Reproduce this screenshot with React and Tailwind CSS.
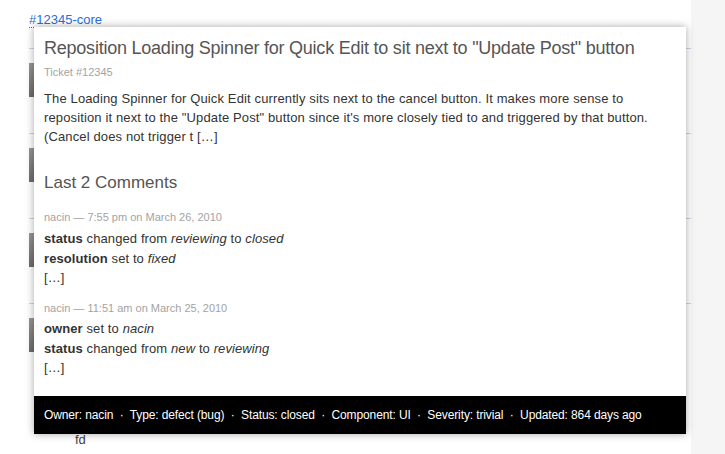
import React from 'react';

const rows = [0, 1, 2, 3];

export default function App() {
  return (
    <div className="relative w-[725px] h-[454px] overflow-hidden bg-[#f5f5f5] text-[#333]" style={{ fontFamily: '"Liberation Sans", Arial, sans-serif' }}>
      <div className="w-[691px] h-full bg-white pl-[29px] pt-[12px]">
        <div className="text-[13px] leading-[15px]">
          <a className="text-[#2a6fd6] border-b border-dotted border-[#2a6fd6]">#12345-core</a>
        </div>
        <div className="mt-[21px]">
          {rows.map((r) => (
            <div key={r} className="h-[85px] border-t border-[#c9d6e8] pt-[14px]">
              <div className="w-[40px] h-[34px] bg-gradient-to-b from-[#9a9694] to-[#6f6b69]" />
            </div>
          ))}
        </div>
        <div className="pl-[46px] pt-[44px] text-[13px] leading-[15px] text-[#444]">fd</div>
      </div>

      <div className="absolute left-[34px] top-[27px] w-[652px] bg-white shadow-[0_0_8px_rgba(0,0,0,0.35)]">
        <div className="px-[10px] pt-[10px]">
          <h2 className="text-[18px] leading-[22px] text-[#555] tracking-[-0.23px]">
            Reposition Loading Spinner for Quick Edit to sit next to "Update Post" button
          </h2>
          <div className="mt-[7px] text-[11px] leading-[13px] text-[#a3a3a3]">Ticket #12345</div>
          <p className="mt-[10px] text-[13px] leading-[19px] text-[#333] tracking-[0.13px]">
            The Loading Spinner for Quick Edit currently sits next to the cancel button. It makes more sense to reposition it next to the "Update Post" button since it's more closely tied to and triggered by that button. (Cancel does not trigger t […]
          </p>
          <h3 className="mt-[27px] text-[17px] leading-[20px] text-[#555]">Last 2 Comments</h3>

          <div className="mt-[18px] text-[11px] leading-[13px] text-[#a3a3a3]">nacin — 7:55 pm on March 26, 2010</div>
          <div className="mt-[5px] text-[13px] leading-[20px] tracking-[0.1px]">
            <div><b>status</b> changed from <i>reviewing</i> to <i>closed</i></div>
            <div><b>resolution</b> set to <i>fixed</i></div>
            <div className="leading-[18px]">[…]</div>
          </div>

          <div className="mt-[15px] text-[11px] leading-[13px] text-[#a3a3a3]">nacin — 11:51 am on March 25, 2010</div>
          <div className="mt-[4px] text-[13px] leading-[20px] tracking-[0.1px]">
            <div><b>owner</b> set to <i>nacin</i></div>
            <div><b>status</b> changed from <i>new</i> to <i>reviewing</i></div>
            <div className="leading-[18px]">[…]</div>
          </div>
        </div>
        <div className="mt-[19px] h-[38px] bg-black text-white text-[12px] tracking-[-0.12px] flex items-center px-[10px]">
          Owner: nacin &nbsp;·&nbsp; Type: defect (bug) &nbsp;·&nbsp; Status: closed &nbsp;·&nbsp; Component: UI &nbsp;·&nbsp; Severity: trivial &nbsp;·&nbsp; Updated: 864 days ago
        </div>
      </div>
    </div>
  );
}
